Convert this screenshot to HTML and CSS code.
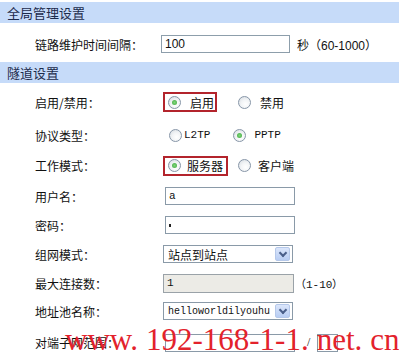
FILE: index.html
```html
<!DOCTYPE html>
<html lang="zh-CN">
<head>
    <meta charset="UTF-8">
    <title>隧道设置</title>
    <link rel="stylesheet" href="styles.css">
</head>
<body>
    <div class="page">
        <div class="section-title">全局管理设置</div>
        <div class="row row-first">
            <span class="label">链路维护时间间隔：</span>
            <span class="field w129">100</span>
            <span class="hint">秒（60-1000）</span>
        </div>

        <div class="section-title">隧道设置</div>
        <div class="row h36">
            <span class="label">启用/禁用：</span>
            <span class="mark mark-on">
                <span class="radio checked"></span>
                <span class="opt">启用</span>
            </span>
            <span class="radio gap-right"></span>
            <span class="opt">禁用</span>
        </div>
        <div class="row h30">
            <span class="label">协议类型：</span>
            <span class="radio r-l2tp"></span>
            <span class="opt latin">L2TP</span>
            <span class="radio checked r-pptp"></span>
            <span class="opt latin">PPTP</span>
        </div>
        <div class="row h31">
            <span class="label">工作模式：</span>
            <span class="mark mark-mode">
                <span class="radio checked"></span>
                <span class="opt">服务器</span>
            </span>
            <span class="radio r-client"></span>
            <span class="opt">客户端</span>
        </div>
        <div class="row h30">
            <span class="label">用户名：</span>
            <span class="field latin indent">a</span>
        </div>
        <div class="row h28">
            <span class="label">密码：</span>
            <span class="field indent"><span class="pwdot"></span></span>
        </div>
        <div class="row h30">
            <span class="label">组网模式：</span>
            <span class="select">站点到站点<span class="arrow"></span></span>
        </div>
        <div class="row h28">
            <span class="label">最大连接数：</span>
            <span class="field disabled latin">1</span>
            <span class="hint latin">（1-10）</span>
        </div>
        <div class="row h28">
            <span class="label">地址池名称：</span>
            <span class="select mono">helloworldilyouhu<span class="arrow"></span></span>
        </div>
        <div class="row h35">
            <span class="label">对端子网范围：</span>
            <span class="field indent"></span>
            <span class="slash">/</span>
            <span class="field small"></span>
        </div>

        <div class="watermark">www<span class="dot">.</span>192-168-1-1<span class="dot">.</span>net<span class="dot">.</span>cn</div>
    </div>
</body>
</html>
```

FILE: styles.css
```css
body {
    margin: 0;
    font-family: "Noto Sans CJK SC", sans-serif;
    font-size: 12px;
    color: #111;
    background: #fff;
}
.page {
    position: relative;
    width: 399px;
    height: 358px;
    overflow: hidden;
    padding-top: 2px;
    box-sizing: border-box;
}
.section-title {
    height: 21px;
    line-height: 21px;
    padding-left: 7px;
    background-color: #c6dbf9;
    color: #1d2b4c;
    font-size: 13px;
}
.section-title + .row.h36 {
    margin-top: 1px;
}
.row {
    display: flex;
    align-items: center;
    box-sizing: border-box;
}
.row-first { height: 39px; padding-top: 3px; }
.h36 { height: 36px; }
.h35 { height: 35px; }
.h31 { height: 31px; }
.h30 { height: 30px; }
.h28 { height: 28px; }
.label {
    width: 126px;
    padding-left: 35px;
    flex-shrink: 0;
}
.field {
    display: inline-flex;
    align-items: center;
    box-sizing: border-box;
    width: 130px;
    height: 18px;
    margin-left: 4px;
    padding-left: 3px;
    border: 1px solid #8a9aa8;
    background: #fff;
    font-family: "Liberation Sans", sans-serif;
    font-size: 12px;
}
.field.w129 {
    width: 129px;
    margin-left: 0;
    border-color: #8d9eab;
}
.field.disabled {
    width: 131px;
    height: 19px;
    margin-left: 2px;
    background: #ecebe6;
    border-color: #9aa2a8;
}
.field.small {
    width: 21px;
    margin-left: 7px;
}
.latin {
    font-family: "Liberation Mono", monospace;
    font-size: 11px;
}
.pwdot {
    width: 2px;
    height: 3px;
    background: #222;
}
.hint {
    margin-left: 7px;
    font-family: "Liberation Sans", sans-serif;
    font-size: 12px;
}
.hint.latin {
    margin-left: 1px;
    font-family: "Liberation Mono", monospace;
    font-size: 11px;
}
.slash {
    margin-left: 12px;
    font-family: "Liberation Serif", serif;
}
.radio {
    position: relative;
    box-sizing: border-box;
    width: 13px;
    height: 13px;
    border: 1px solid #8796a8;
    border-radius: 50%;
    background: radial-gradient(circle at 60% 65%, #ffffff 0%, #f2f4f6 45%, #d3d9df 100%);
    flex-shrink: 0;
}
.radio.checked::after {
    content: "";
    position: absolute;
    left: 3px;
    top: 3px;
    width: 5px;
    height: 5px;
    border-radius: 50%;
    background: radial-gradient(circle, #7fd67a 0%, #3fa73f 100%);
}
.opt {
    white-space: nowrap;
}
.mark {
    display: inline-flex;
    align-items: center;
    box-sizing: border-box;
    height: 20px;
    margin-left: 2px;
    border: 2px solid #b3242c;
}
.mark .radio {
    margin-left: 3px;
}
.mark-on {
    width: 54px;
}
.mark-on .opt {
    margin-left: 9px;
}
.mark-mode {
    width: 65px;
}
.mark-mode .opt {
    margin-left: 6px;
}
.gap-right {
    margin-left: 21px;
}
.gap-right + .opt {
    margin-left: 9px;
}
.r-l2tp {
    margin-left: 8px;
}
.r-l2tp + .opt {
    margin-left: 2px;
}
.r-pptp {
    margin-left: 23px;
}
.r-pptp + .opt {
    margin-left: 8px;
}
.r-client {
    margin-left: 10px;
}
.r-client + .opt {
    margin-left: 7px;
}
.select {
    position: relative;
    display: inline-flex;
    align-items: center;
    box-sizing: border-box;
    width: 130px;
    height: 18px;
    margin-left: 2px;
    padding-left: 4px;
    border: 1px solid #8a9aa8;
    background: #fff;
}
.select.mono {
    font-family: "Liberation Mono", monospace;
    font-size: 10px;
    letter-spacing: 0;
}
.arrow {
    position: absolute;
    right: 2px;
    top: 1px;
    box-sizing: border-box;
    width: 15px;
    height: 14px;
    border: 1px solid #b5c8ea;
    border-radius: 2px;
    background: linear-gradient(#dbe6fb, #b8cdf3);
}
.arrow::after {
    content: "";
    position: absolute;
    left: 4px;
    top: 2px;
    width: 4px;
    height: 4px;
    border-right: 2px solid #4a5f8a;
    border-bottom: 2px solid #4a5f8a;
    transform: rotate(45deg);
}
.watermark {
    position: absolute;
    left: 65px;
    top: 322px;
    font-family: "Liberation Serif", serif;
    font-size: 31px;
    color: #e3222c;
    white-space: nowrap;
    line-height: 36px;
}
.dot {
    margin-right: 8px;
}
```
